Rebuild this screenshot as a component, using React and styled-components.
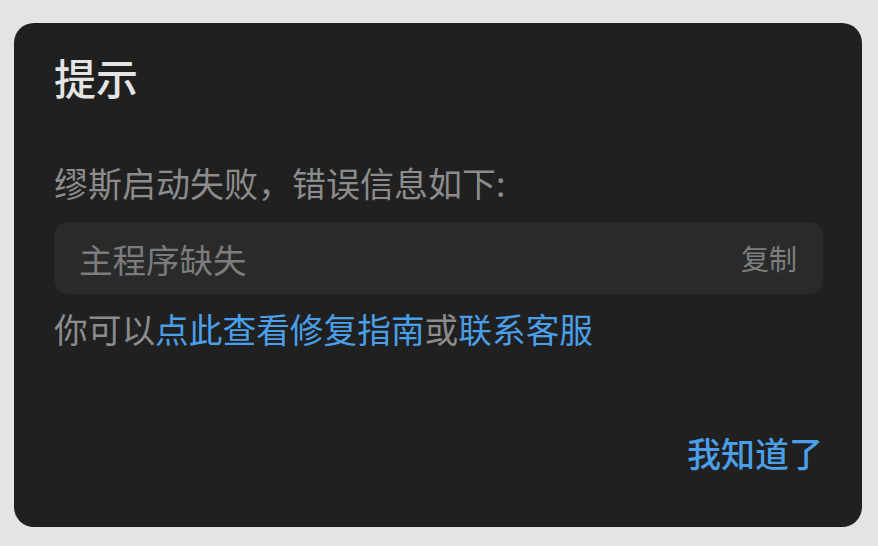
import React from "react";
import styled, { createGlobalStyle } from "styled-components";

const GlobalStyle = createGlobalStyle`
  html, body {
    margin: 0;
    padding: 0;
    background: #e4e4e4;
  }
  body {
    font-family: "Noto Sans CJK SC", "Noto Sans", sans-serif;
  }
`;

const Page = styled.div`
  width: 878px;
  height: 546px;
  padding: 23px 16px 19px 14px;
  box-sizing: border-box;
`;

const Dialog = styled.div`
  height: 100%;
  box-sizing: border-box;
  background: #202020;
  border-radius: 20px;
  padding: 26px 39px 0 40px;
  display: flex;
  flex-direction: column;
`;

const Title = styled.h2`
  margin: 0;
  font-size: 42px;
  line-height: 56px;
  font-weight: 500;
  color: #e4e4e4;
`;

const Message = styled.p`
  margin: 55px 0 0;
  font-size: 34px;
  line-height: 46px;
  color: #8c8c8c;
`;

const ErrorBox = styled.div`
  margin-top: 16px;
  height: 72px;
  border-radius: 14px;
  background: #2a2a2a;
  display: flex;
  align-items: center;
  justify-content: space-between;
  padding: 0 26px 0 25px;
`;

const ErrorText = styled.span`
  font-size: 33.5px;
  color: #7c7c7c;
`;

const CopyButton = styled.button`
  border: 0;
  background: none;
  padding: 0;
  font-family: inherit;
  font-size: 28px;
  color: #7e7e7e;
  cursor: pointer;
`;

const HelpLine = styled.p`
  margin: 12px 0 0;
  font-size: 33.7px;
  line-height: 46px;
  color: #8c8c8c;
`;

const Link = styled.a`
  color: #4a9fe8;
  text-decoration: none;
  cursor: pointer;
`;

const Footer = styled.div`
  margin-top: auto;
  padding-bottom: 51px;
  display: flex;
  justify-content: flex-end;
`;

const ConfirmButton = styled.button`
  border: 0;
  background: none;
  padding: 0;
  font-family: inherit;
  font-size: 34px;
  line-height: 46px;
  font-weight: 500;
  color: #4a9fe8;
  cursor: pointer;
`;

export default function App() {
  return (
    <>
      <GlobalStyle />
      <Page>
        <Dialog>
          <Title>提示</Title>
          <Message>缪斯启动失败，错误信息如下:</Message>
          <ErrorBox>
            <ErrorText>主程序缺失</ErrorText>
            <CopyButton>复制</CopyButton>
          </ErrorBox>
          <HelpLine>
            你可以<Link>点此查看修复指南</Link>或<Link>联系客服</Link>
          </HelpLine>
          <Footer>
            <ConfirmButton>我知道了</ConfirmButton>
          </Footer>
        </Dialog>
      </Page>
    </>
  );
}
